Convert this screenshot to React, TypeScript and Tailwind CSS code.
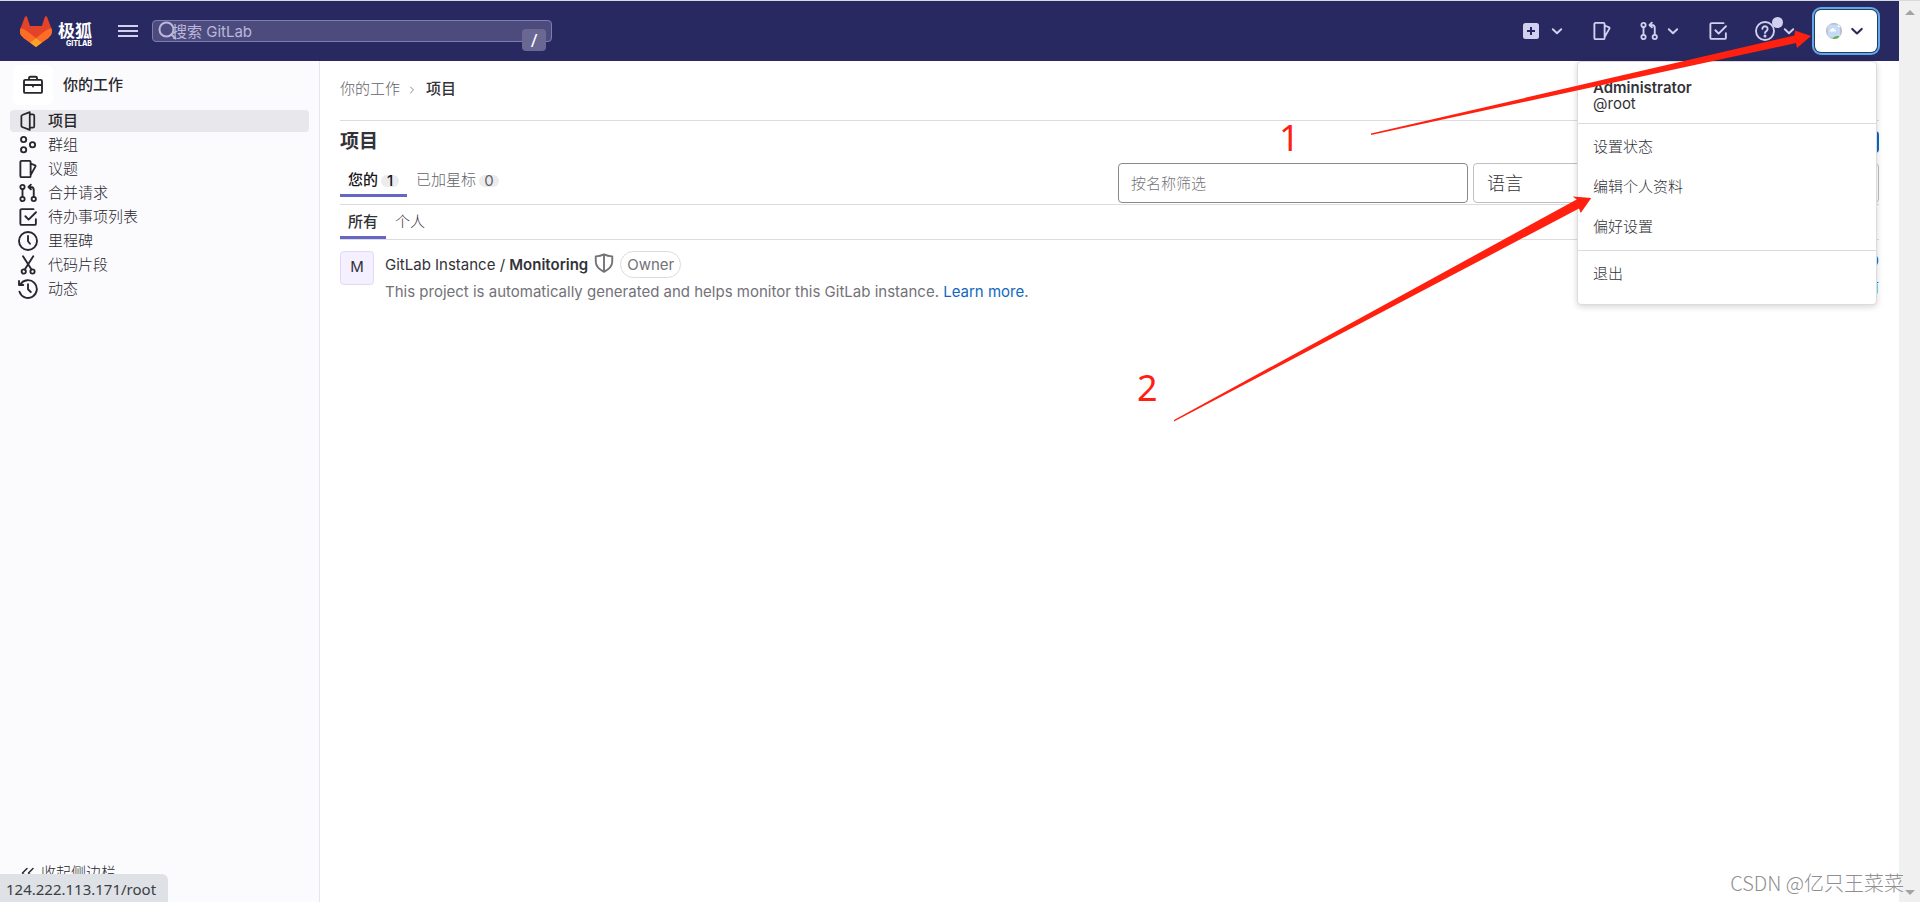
import type { ReactNode } from "react";

interface IconProps {
  className?: string;
  children?: ReactNode;
}

function Icon({ className = "size-5", children }: IconProps) {
  return (
    <svg
      viewBox="0 0 16 16"
      className={`shrink-0 ${className}`}
      fill="none"
      stroke="currentColor"
      strokeWidth="1.5"
      strokeLinecap="round"
      strokeLinejoin="round"
      aria-hidden="true"
    >
      {children}
    </svg>
  );
}

const ProjectIcon = () => (
  <Icon>
    <path d="M9.4.9v14.2L3.4 12.8a1 1 0 0 1-.7-.9V4.1a1 1 0 0 1 .7-.9L9.4.9ZM9.4 2.7h2.4a1.2 1.2 0 0 1 1.2 1.2v8.2a1.200 1.200 0 0 1-1.200 1.200H9.400" strokeWidth="1.4" />
  </Icon>
);

const GroupIcon = () => (
  <Icon>
    <circle cx="4.5" cy="3.6" r="2.1" />
    <circle cx="4.5" cy="11.8" r="2.1" />
    <circle cx="11.6" cy="7.8" r="2.1" />
  </Icon>
);

const IssuesIcon = ({ className }: IconProps) => (
  <Icon className={className}>
    <path d="M2.9 1.5h6.2a1 1 0 0 1 1 1v11a1 1 0 0 1-1 1H2.9a1 1 0 0 1-1-1v-11a1 1 0 0 1 1-1ZM10.1 3.6l3.6 1.5a.6.6 0 0 1 .3.8l-3.9 7" />
  </Icon>
);

const MergeIcon = ({ className }: IconProps) => (
  <Icon className={className}>
    <circle cx="3.6" cy="3.2" r="1.7" />
    <circle cx="3.6" cy="12.8" r="1.7" />
    <circle cx="12.6" cy="12.8" r="1.7" />
    <path d="M3.6 5v6M12.6 11V5.6a2.4 2.4 0 0 0-2.4-2.4H8.6M10.3 1.3 8.4 3.2l1.9 1.9" />
  </Icon>
);

const TodoIcon = ({ className }: IconProps) => (
  <Icon className={className}>
    <path d="M12.4 1.7H2.9a1 1 0 0 0-1 1v10.6a1 1 0 0 0 1 1h10.4a1 1 0 0 0 1-1V9.8M5.9 7.4l2.6 2.7L14.4 4.2" />
  </Icon>
);

const ClockIcon = () => (
  <Icon>
    <circle cx="8" cy="8" r="7.2" />
    <path d="M8 4v4.2l1.6 2" />
  </Icon>
);

const SnippetIcon = () => (
  <Icon>
    <circle cx="4.6" cy="13.2" r="1.7" />
    <circle cx="11.6" cy="13.2" r="1.7" />
    <path d="M4 1l6.8 10.6M12.2 1 5.4 11.6" />
  </Icon>
);

const HistoryIcon = () => (
  <Icon>
    <path d="M1.2 10.2A7.1 7.1 0 1 0 2 4.2M.8 1.6v3.2h3.4M8 4.2v4l2.2 2.2" />
  </Icon>
);

const BriefcaseIcon = () => (
  <Icon>
    <path d="M1.8 3.9h12.4a1 1 0 0 1 1 1v8.4a1 1 0 0 1-1 1H1.8a1 1 0 0 1-1-1V4.9a1 1 0 0 1 1-1ZM4.8 3.8V2.4a1 1 0 0 1 1-1h4.4a1 1 0 0 1 1 1v1.4M1 8h14M8 8v1.2" />
  </Icon>
);

const ChevronDown = ({ className = "size-4" }: IconProps) => (
  <Icon className={className}>
    <path d="m3.8 6.2 4.2 4 4.2-4" strokeWidth="1.9" />
  </Icon>
);

const navItems: { label: string; icon: () => ReactNode; active?: boolean }[] = [
  { label: "项目", icon: ProjectIcon, active: true },
  { label: "群组", icon: GroupIcon },
  { label: "议题", icon: IssuesIcon },
  { label: "合并请求", icon: MergeIcon },
  { label: "待办事项列表", icon: TodoIcon },
  { label: "里程碑", icon: ClockIcon },
  { label: "代码片段", icon: SnippetIcon },
  { label: "动态", icon: HistoryIcon },
];

const menuItems = ["设置状态", "编辑个人资料", "偏好设置"];

function Logo() {
  return (
    <a href="#" className="flex items-center gap-1.5 text-white">
      <svg viewBox="0 0 25 24" className="h-[31px] w-8" aria-hidden="true">
        <path
          fill="#e24329"
          d="m24.507 9.5-.034-.09L21.082.562a.896.896 0 0 0-1.694.091l-2.29 7.01H7.825L5.535.653a.898.898 0 0 0-1.694-.09L.451 9.411.416 9.5a6.297 6.297 0 0 0 2.09 7.278l.012.01.03.022 5.16 3.867 2.56 1.935 1.554 1.176a1.051 1.051 0 0 0 1.268 0l1.555-1.176 2.56-1.935 5.197-3.89.014-.01A6.297 6.297 0 0 0 24.507 9.5Z"
        />
        <path
          fill="#fc6d26"
          d="m24.507 9.5-.034-.09a11.44 11.44 0 0 0-4.56 2.051l-7.447 5.632 4.742 3.584 5.197-3.89.014-.01A6.297 6.297 0 0 0 24.507 9.5Z"
        />
        <path
          fill="#fca326"
          d="m7.707 20.677 2.56 1.935 1.555 1.176a1.051 1.051 0 0 0 1.268 0l1.555-1.176 2.56-1.935-4.743-3.584-4.755 3.584Z"
        />
        <path
          fill="#fc6d26"
          d="M5.01 11.461a11.43 11.43 0 0 0-4.56-2.05L.416 9.5a6.297 6.297 0 0 0 2.09 7.278l.012.01.03.022 5.16 3.867 4.745-3.584-7.444-5.632Z"
        />
      </svg>
      <span className="flex flex-col items-end pt-1.5">
        <span className="text-[17px] leading-[18px] font-bold">极狐</span>
        <span className="text-[7px] leading-[7px] font-extrabold">GITLAB</span>
      </span>
    </a>
  );
}

function Header() {
  return (
    <header className="flex h-[60px] items-center bg-[#292961] pr-[22px] pl-5 text-[#d1d0ef]">
      <Logo />
      <button aria-label="菜单" className="ml-[26px] flex w-5 flex-col gap-[3px]">
        <span className="h-0.5 w-full bg-current" />
        <span className="h-0.5 w-full bg-current" />
        <span className="h-0.5 w-full bg-current" />
      </button>
      <div className="relative ml-3.5 w-[400px]">
        <input
          type="search"
          aria-label="搜索 GitLab"
          placeholder="搜索 GitLab"
          className="block h-[22px] w-full rounded border border-[#7f7db0] bg-[#4d4b7e] pl-[19px] text-[15px] leading-5 text-white placeholder:text-[#bab8dc]"
        />
        <svg
          viewBox="0 0 20 20"
          className="absolute top-px left-1.5 size-5"
          fill="none"
          stroke="#bab8dc"
          strokeWidth="2"
          strokeLinecap="round"
          aria-hidden="true"
        >
          <circle cx="8.5" cy="8.5" r="7" />
          <path d="m13.5 13.5 4 4" />
        </svg>
        <kbd className="absolute top-[9px] right-1.5 flex h-[22px] w-6 items-center justify-center rounded bg-[#6a6893] font-sans text-[18px] text-white">
          /
        </kbd>
      </div>

      <div className="ml-auto flex items-center gap-[27px]">
        <button aria-label="新建" className="flex items-center gap-2">
          <svg viewBox="0 0 20 20" className="size-5" aria-hidden="true">
            <rect x="2" y="2" width="16" height="16" rx="2.5" fill="currentColor" />
            <path d="M10 6v8M6 10h8" stroke="#292961" strokeWidth="2" />
          </svg>
          <ChevronDown />
        </button>
        <a href="#" aria-label="议题">
          <IssuesIcon />
        </a>
        <button aria-label="合并请求" className="flex items-center gap-1.5">
          <MergeIcon />
          <ChevronDown />
        </button>
        <a href="#" aria-label="待办事项">
          <TodoIcon />
        </a>
        <button aria-label="帮助" className="relative flex items-center gap-1.5">
          <Icon>
            <circle cx="8" cy="8" r="7.2" />
            <path d="M5.9 6.3a2.1 2.1 0 1 1 3.2 1.8c-.7.4-1.1.8-1.1 1.5" />
            <circle cx="8" cy="12" r=".5" fill="currentColor" />
          </Icon>
          <span className="absolute -top-1 left-[17px] size-[11px] rounded-full bg-current" />
          <ChevronDown />
        </button>
      </div>
      <button
        aria-label="Administrator"
        className="ml-[18px] flex h-[42px] w-[62px] items-center justify-center gap-1.5 rounded-md bg-white text-[#292961] shadow-[0_0_0_1px_#1f3f5f,0_0_0_3px_#63a6e9]"
      >
        <svg viewBox="0 0 16 16" className="size-4" aria-hidden="true">
          <clipPath id="avatar-clip">
            <circle cx="8" cy="8" r="8" />
          </clipPath>
          <g clipPath="url(#avatar-clip)">
            <path fill="#b6b6bb" d="M0 0h16v16H0z" />
            <path fill="#c5daf7" d="M1.5 1.5h10.8l2 2v11H1.5z" />
            <path fill="#fff" d="M12 1.5v2.6h2.6zM3.5 8.6c0-2 1.8-1.8 2-2.8 1.4-1.6 3-.4 3 .8 1.4 0 1.6 1.4 1.2 2z" />
            <path fill="#5fb548" d="M7 15c1.5-1.8 4-2.2 6-2V16H7z" />
          </g>
        </svg>
        <ChevronDown className="size-[18px]" />
      </button>
    </header>
  );
}

function Sidebar() {
  return (
    <aside className="flex w-80 shrink-0 flex-col border-r border-[#e6e6ea] bg-[#fbfafd] px-2.5 font-light text-[#28272d]">
      <div className="mt-1 ml-[3px] flex h-10 items-center gap-2.5">
        <span className="flex size-10 items-center justify-center rounded-md bg-white">
          <BriefcaseIcon />
        </span>
        <span className="font-medium">你的工作</span>
      </div>
      <nav className="mt-[5px] flex flex-col gap-0.5">
        {navItems.map(({ label, icon: ItemIcon, active }) => (
          <a
            key={label}
            href="#"
            className={`flex h-[22px] items-center gap-2.5 rounded px-2 ${active ? "bg-[#e8e7ec] font-medium" : ""}`}
          >
            <ItemIcon />
            {label}
          </a>
        ))}
      </nav>
      <button className="mt-auto mb-[17px] flex h-6 items-center gap-[5px] pl-2.5">
        <Icon className="size-4">
          <path d="M7 3.5 2.5 8 7 12.5M13 3.5 8.5 8l4.5 4.5" />
        </Icon>
        收起侧边栏
      </button>
    </aside>
  );
}

function UserMenu() {
  return (
    <div className="absolute top-[60px] right-[43px] w-[300px] rounded border border-[#dcdcde] bg-white text-[#333238] shadow-[0_2px_6px_rgba(0,0,0,0.16)]">
      <div className="h-[62px] border-b border-[#dcdcde] px-[15px] pt-[18px] leading-4">
        <div className="font-semibold">Administrator</div>
        <div>@root</div>
      </div>
      <ul className="border-b border-[#dcdcde] py-[3px] font-light">
        {menuItems.map((item) => (
          <li key={item}>
            <a href="#" className="flex h-10 items-center px-[15px]">
              {item}
            </a>
          </li>
        ))}
      </ul>
      <a href="#" className="mt-[3px] mb-2.5 flex h-10 items-center px-[15px] font-light">
        退出
      </a>
    </div>
  );
}

function Projects() {
  return (
    <main className="min-w-0 flex-1 px-5 text-[#333238]">
      <nav className="flex h-[60px] items-center gap-2 border-b border-[#dcdcde] pb-0.5">
        <a href="#" className="font-light text-[#626168]">
          你的工作
        </a>
        <Icon className="size-2 text-[#89888d]">
          <path d="m5 2 6 6-6 6" strokeWidth="2" />
        </Icon>
        <span className="ml-0.5 font-medium">项目</span>
      </nav>

      <div className="flex h-10 items-center justify-between pt-0.5">
        <h1 className="text-[19px] font-bold">项目</h1>
        <button className="h-[22px] rounded bg-[#1068bf] px-3 text-white">新建项目</button>
      </div>

      <div className="flex h-11 items-start border-b border-[#dcdcde] pt-0.5">
        <a href="#" className="flex h-[34px] items-center gap-[3px] px-2 pt-px font-medium text-[#18171d] shadow-[inset_0_-3px_0_#6666c4]">
          您的
          <span className="w-[18px] rounded-full bg-[#ececef] text-center leading-3">1</span>
        </a>
        <a href="#" className="ml-px flex h-[34px] items-center gap-[3px] px-2 pt-px font-light text-[#626168]">
          已加星标
          <span className="w-5 rounded-full bg-[#ececef] text-center leading-3 font-normal">0</span>
        </a>
        <input
          type="search"
          aria-label="按名称筛选"
          placeholder="按名称筛选"
          className="ml-auto h-10 w-[350px] rounded border border-[#89888d] px-3 font-light placeholder:text-[#737278]"
        />
        <select
          aria-label="语言"
          className="ml-[5px] h-10 w-[406px] appearance-none rounded border border-[#bfbfc3] px-[13px] text-[18px] font-light"
        >
          <option>语言</option>
        </select>
      </div>

      <div className="flex h-[35px] border-b border-[#dcdcde]">
        <a href="#" className="flex items-center px-2 font-medium shadow-[inset_0_-3px_0_#6666c4]">
          所有
        </a>
        <a href="#" className="ml-px flex items-center px-2 font-light">
          个人
        </a>
      </div>

      <div className="flex pt-[11px]">
        <span className="flex size-[34px] items-center justify-center rounded border border-[#e1d8f9] bg-[#f4f0ff] pb-0.5">M</span>
        <div className="ml-[11px]">
          <div className="flex h-[27px] items-center">
            <a href="#" className="pt-px">
              GitLab Instance / <span className="font-semibold">Monitoring</span>
            </a>
            <Icon className="mb-1 ml-1.5 size-5 text-[#737278]">
              <path d="M8 1.2v13.6M1.4 2.7C4 2.5 6 2 8 1.1c2 .9 4 1.4 6.6 1.6V7c0 3.6-2.6 6-6.6 8.1C4 13 1.4 10.6 1.4 7Z" />
            </Icon>
            <span className="ml-1.5 flex h-[27px] items-center rounded-full border border-[#dcdcde] px-1.5 pt-px text-[#737278]">Owner</span>
          </div>
          <p className="leading-7 text-[#737278]">
            This project is automatically generated and helps monitor this GitLab instance.{" "}
            <a href="#" className="text-[#1068bf]">
              Learn more
            </a>
            .
          </p>
        </div>
        <div className="ml-auto text-right text-[#1068bf]">
          <div className="leading-5">0</div>
          <div className="leading-8">1 小时前</div>
        </div>
      </div>
    </main>
  );
}

function Annotations() {
  return (
    <div className="pointer-events-none absolute -top-px right-0 h-[440px] w-[820px] font-['Noto_Sans',sans-serif] text-[36px] leading-[36px] text-[#ff2010]">
      <svg viewBox="0 0 820 440" className="absolute inset-0 h-full w-full" fill="#ff2010" aria-hidden="true">
        <path d="M271 133.5 694.5 35.5 695 30.5 711 36 697 48 696 43 271 135Z" />
        <path d="M74 420 476.7 199.5 472.7 196.5 491.3 198 480.7 213 479 208.5 74 421.5Z" />
      </svg>
      <span className="absolute top-[120px] left-[179px]">1</span>
      <span className="absolute top-[370px] left-[37px]">2</span>
    </div>
  );
}

export default function App() {
  return (
    <div className="relative flex min-h-screen flex-col overflow-hidden border-t border-[#d9dadd] bg-white font-['Inter','Noto_Sans_CJK_SC',sans-serif] text-[15px]">
      <div className="flex flex-1">
        <div className="flex min-w-0 flex-1 flex-col">
          <Header />
          <div className="flex flex-1">
            <Sidebar />
            <Projects />
          </div>
        </div>
        <div className="flex w-[21px] shrink-0 flex-col items-center justify-between bg-[#f0f0f0] pt-[9px] pb-[7px]">
          <span className="border-x-[5px] border-b-[5px] border-x-transparent border-b-[#a3a3a3]" />
          <span className="border-x-[5px] border-t-[5px] border-x-transparent border-t-[#a3a3a3]" />
        </div>
      </div>
      <UserMenu />
      <Annotations />
      <div className="absolute bottom-0 left-0 h-7 rounded-tr-md bg-[#dee1e6] pr-3 pl-1.5 font-['Noto_Sans',sans-serif] leading-[30px] text-[#3c4043]">
        124.222.113.171/root
      </div>
      <div className="absolute right-4 bottom-1 font-['Noto_Sans_CJK_SC',sans-serif] text-[20px] leading-[30px] font-light text-[#8f8f92]">
        CSDN @亿只王菜菜
      </div>
    </div>
  );
}
